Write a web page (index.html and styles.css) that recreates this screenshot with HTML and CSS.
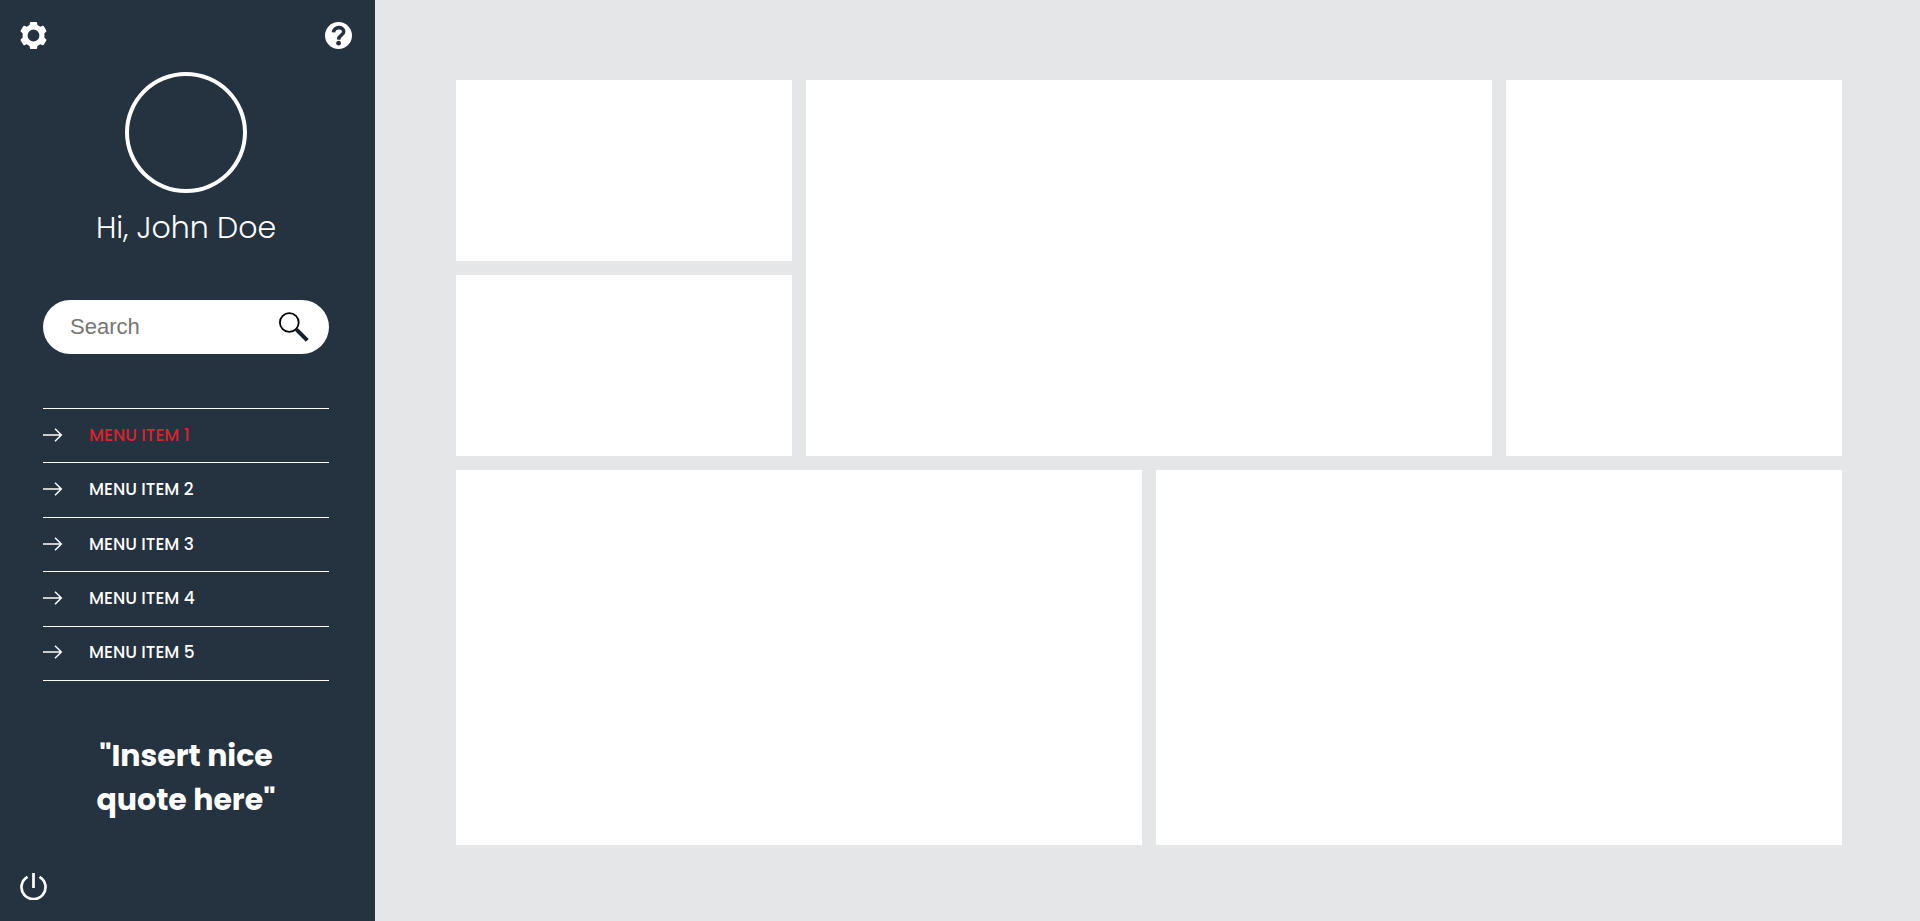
FILE: index.html
```html
<!DOCTYPE html>
<html lang="en">
<head>
  <meta charset="utf-8">
  <meta name="viewport" content="width=device-width, initial-scale=1">
  <title>Dashboard</title>
  <link rel="stylesheet" href="styles.css">
</head>
<body>
  <div class="dashboard">
    <aside class="sidebar">
      <div class="sidebar-top">
        <button class="icon-button" type="button" aria-label="Settings">
          <svg viewBox="0 0 27 27" aria-hidden="true">
            <path fill="currentColor" fill-rule="evenodd" d="M10.800 0h5.400q.8 0 .9.800l.3 2.200 2.900 1.700 2.300-.9q.8-.3 1.200.4l2.500 4.400q.4.7-.2 1.200l-1.700 1.500v4.400l1.700 1.500q.6.5.2 1.200l-2.500 4.400q-.4.7-1.200.4l-2.300-.9-2.900 1.700-.3 2.200q-.1.800-.9.800h-5.400q-.8 0-.9-.8l-.3-2.200-2.900-1.700-2.300.9q-.8.3-1.200-.4l-2.500-4.400q-.4-.7.2-1.200l1.700-1.500v-4.400l-1.700-1.500q-.6-.5-.2-1.200l2.500-4.400q.4-.7 1.200-.4l2.300.9 2.900-1.700.3-2.200q.1-.8.9-.8zM13.500 7.600a5.900 5.900 0 1 0 0 11.800a5.900 5.900 0 1 0 0-11.800z"/>
          </svg>
        </button>
        <button class="icon-button" type="button" aria-label="Help">
          <svg viewBox="0 0 27 27" aria-hidden="true">
            <circle cx="13.500" cy="13.500" r="13.500" fill="currentColor"/>
            <path class="help-mark" d="M8.500 10.400C8.800 4.200 18.900 4.200 18.700 9.700C18.600 13.300 13.700 13.200 13.600 17.600"/>
            <circle class="help-dot" cx="13.600" cy="21.200" r="2.400"/>
          </svg>
        </button>
      </div>

      <div class="sidebar-body">
        <div class="avatar"></div>
        <h1 class="greeting">Hi, John Doe</h1>

        <form class="search" role="search">
          <input class="search-input" type="search" placeholder="Search" aria-label="Search">
          <button class="search-button" type="submit" aria-label="Submit search">
            <svg viewBox="0 0 30 30" aria-hidden="true">
              <circle cx="10.300" cy="10.500" r="9.400" fill="none" stroke="#000" stroke-width="1.800"/>
              <path d="M17.300 17.300L28.300 28.300" stroke="#15202a" stroke-width="4"/>
            </svg>
          </button>
        </form>

        <nav class="menu">
          <a class="menu-item is-active" href="#item-1"><svg class="arrow" viewBox="0 0 20 14" aria-hidden="true"><path d="M0 7h18M12 .7L18.300 7L12 13.300"/></svg>MENU ITEM 1</a>
          <a class="menu-item" href="#item-2"><svg class="arrow" viewBox="0 0 20 14" aria-hidden="true"><path d="M0 7h18M12 .7L18.300 7L12 13.300"/></svg>MENU ITEM 2</a>
          <a class="menu-item" href="#item-3"><svg class="arrow" viewBox="0 0 20 14" aria-hidden="true"><path d="M0 7h18M12 .7L18.300 7L12 13.300"/></svg>MENU ITEM 3</a>
          <a class="menu-item" href="#item-4"><svg class="arrow" viewBox="0 0 20 14" aria-hidden="true"><path d="M0 7h18M12 .7L18.300 7L12 13.300"/></svg>MENU ITEM 4</a>
          <a class="menu-item" href="#item-5"><svg class="arrow" viewBox="0 0 20 14" aria-hidden="true"><path d="M0 7h18M12 .7L18.300 7L12 13.300"/></svg>MENU ITEM 5</a>
        </nav>

        <p class="quote">"Insert nice<br>quote here"</p>
      </div>

      <button class="icon-button" type="button" aria-label="Log out">
        <svg viewBox="0 0 27 27" aria-hidden="true">
          <path d="M7.500 3.800a12 12 0 1 0 12 0M13.500 0v15" fill="none" stroke="currentColor" stroke-width="2.700"/>
        </svg>
      </button>
    </aside>

    <main class="panels">
      <section class="panel"></section>
      <section class="panel panel-large"></section>
      <section class="panel panel-tall"></section>
      <section class="panel"></section>
      <section class="panel panel-large"></section>
      <section class="panel panel-large"></section>
    </main>
  </div>
</body>
</html>
```
FILE: styles.css
```css
* {
  box-sizing: border-box;
}

body {
  margin: 0;
  background: #e5e6e8;
  color: #fff;
  font-family: Poppins, Inter, "Open Sans", sans-serif;
}

button {
  padding: 0;
  border: 0;
  background: none;
  color: inherit;
  cursor: pointer;
}

svg {
  display: block;
}

.dashboard {
  display: grid;
  grid-template-columns: 375px 1fr;
  min-height: 100vh;
}

.sidebar {
  display: flex;
  flex-direction: column;
  padding: 22px 23px 21px 20px;
  background: #25323f;
}

.sidebar-top {
  display: flex;
  justify-content: space-between;
}

.icon-button,
.icon-button svg {
  width: 27px;
  height: 27px;
}

.help-mark {
  fill: none;
  stroke: #25323f;
  stroke-width: 3.6;
}

.help-dot {
  fill: #25323f;
}

.sidebar-body {
  display: flex;
  flex: 1;
  flex-direction: column;
  padding: 23px 23px 51px;
}

.avatar {
  align-self: center;
  width: 122px;
  height: 121px;
  border: 4px solid #fff;
  border-radius: 50%;
}

.greeting {
  margin: 13px 0 50px;
  font-size: 30px;
  font-weight: 300;
  line-height: 44px;
  text-align: center;
}

.search {
  display: flex;
  align-items: center;
  height: 54px;
  padding: 0 20px 0 27px;
  border-radius: 27px;
  background: #fff;
}

.search-input {
  flex: 1;
  min-width: 0;
  padding: 0;
  border: 0;
  outline: 0;
  background: none;
  color: #222;
  font-family: "Liberation Sans", Arial, sans-serif;
  font-size: 22px;
}

.search-input::placeholder {
  color: #757575;
}

.search-button,
.search-button svg {
  width: 30px;
  height: 30px;
}

.menu {
  display: flex;
  flex: 1;
  flex-direction: column;
  margin: 54px 0 53px;
  border-top: 1px solid #fff;
}

.menu-item {
  display: flex;
  flex: 1;
  align-items: center;
  gap: 26px;
  min-height: 40px;
  padding-bottom: 2px;
  border-bottom: 1px solid #fff;
  color: #fff;
  font-size: 17px;
  font-weight: 500;
  text-decoration: none;
}

.menu-item.is-active {
  color: #d9232e;
}

.arrow {
  width: 20px;
  height: 14px;
  fill: none;
  stroke: #fff;
  stroke-width: 1.5;
}

.quote {
  margin: 0;
  font-size: 30px;
  font-weight: 700;
  line-height: 44px;
  text-align: center;
}

.panels {
  display: grid;
  grid-template-columns: repeat(4, 1fr);
  grid-template-rows: repeat(4, 1fr);
  gap: 14px;
  padding: 80px 78px 76px 81px;
}

.panel {
  background: #fff;
}

.panel-large {
  grid-column: span 2;
  grid-row: span 2;
}

.panel-tall {
  grid-row: span 2;
}
```
